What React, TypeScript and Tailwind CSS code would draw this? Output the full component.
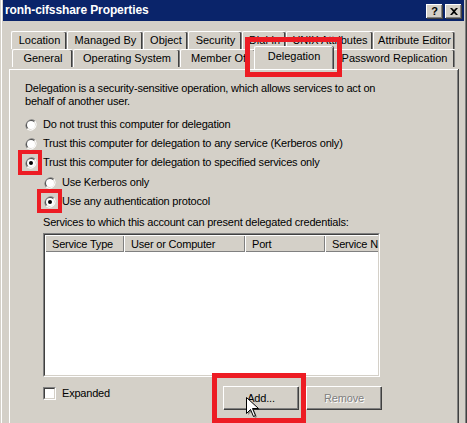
import React from "react";

type TabDef = { label: string; w: string; selected?: boolean };

const rowOne: TabDef[] = [
  { label: "Location", w: "w-[56px]" },
  { label: "Managed By", w: "w-[76px]" },
  { label: "Object", w: "w-[45px]" },
  { label: "Security", w: "w-[54px]" },
  { label: "Dial-in", w: "w-[44px]" },
  { label: "UNIX Attributes", w: "w-[87px]" },
  { label: "Attribute Editor", w: "w-[82px]" },
];

const rowTwo: TabDef[] = [
  { label: "General", w: "w-[61px]" },
  { label: "Operating System", w: "w-[107px]" },
  { label: "Member Of", w: "w-[76px]" },
  { label: "Delegation", w: "w-[79px]", selected: true },
  { label: "Password Replication", w: "w-[122px]" },
];

function Tab({ tab }: { tab: TabDef }) {
  if (tab.selected) {
    return (
      <div
        className={`${tab.w} relative z-10 -ml-[2px] -mt-[3px] h-[23px] bg-[#d4d0c8] border-l border-t border-white rounded-tl-[2px] rounded-tr-[2px] shadow-[inset_-1px_0_0_#808080,1px_0_0_#404040] flex items-start justify-center pt-[3px] whitespace-nowrap`}
      >
        {tab.label}
      </div>
    );
  }
  return (
    <div
      className={`${tab.w} h-[18px] shrink-0 bg-[#d4d0c8] border-l border-t border-white rounded-tl-[2px] rounded-tr-[2px] shadow-[inset_-1px_0_0_#808080,inset_-2px_0_0_#404040] flex items-center justify-center overflow-hidden whitespace-nowrap`}
    >
      {tab.label}
    </div>
  );
}

function Radio({ checked }: { checked?: boolean }) {
  return (
    <svg width="12" height="12" viewBox="0 0 12 12" className="shrink-0">
      <path d="M10.2 1.8 A6 6 0 0 0 1.8 10.2 Z" fill="#808080" />
      <path d="M10.2 1.8 A6 6 0 0 1 1.8 10.2 Z" fill="#ffffff" />
      <path d="M9.5 2.5 A5 5 0 0 0 2.5 9.5 Z" fill="#404040" />
      <path d="M9.5 2.5 A5 5 0 0 1 2.5 9.5 Z" fill="#d4d0c8" />
      <circle cx="6" cy="6" r="4" fill="#ffffff" />
      {checked && <circle cx="6" cy="6" r="2" fill="#000000" />}
    </svg>
  );
}

function RadioRow({ label, checked, className = "" }: { label: string; checked?: boolean; className?: string }) {
  return (
    <div className={`h-[19px] flex items-center gap-[6px] ${className}`}>
      <Radio checked={checked} />
      <span>{label}</span>
    </div>
  );
}

function RedBox({ className }: { className: string }) {
  return <div className={`absolute border-[#ed1c24] pointer-events-none z-20 ${className}`} />;
}

function HeaderCell({ label, w }: { label: string; w: string }) {
  return (
    <div
      className={`${w} h-[17px] shrink-0 bg-[#d4d0c8] border-l border-t border-white shadow-[inset_-1px_-1px_0_#808080] flex items-center pl-[6px] whitespace-nowrap`}
    >
      {label}
    </div>
  );
}

export default function App() {
  return (
    <div className="w-[467px] h-[423px] overflow-hidden relative bg-[#d4d0c8] font-['Liberation_Sans',Arial,sans-serif] text-[11px] text-black leading-[13px] select-none">
      <div className="h-full flex">
        {/* window frame */}
        <div className="w-[3px] h-full border-l border-[#d4d0c8] shadow-[inset_1px_0_0_#ffffff] shrink-0" />
        <div className="flex-1 flex flex-col min-w-0">
          {/* title bar */}
          <div className="h-[21px] bg-[#0a246a] flex items-center pl-[2px] pr-[2px]">
            <span className="text-white font-bold text-[12px] tracking-[-0.1px] flex-1">ronh-cifsshare Properties</span>
            <div className="w-[16px] h-[14px] bg-[#d4d0c8] border-l border-t border-white shadow-[inset_-1px_-1px_0_#808080,1px_1px_0_#404040] flex items-center justify-center font-bold text-[11px] leading-none">
              ?
            </div>
            <div className="w-[16px] h-[14px] ml-[3px] mr-[1px] bg-[#d4d0c8] border-l border-t border-white shadow-[inset_-1px_-1px_0_#808080,1px_1px_0_#404040] flex items-center justify-center">
              <svg width="8" height="7" viewBox="0 0 8 7">
                <path d="M0 0h2l2 2 2-2h2L5 3.5 8 7H6L4 5 2 7H0l3-3.5z" fill="#000" />
              </svg>
            </div>
          </div>

          {/* tab strip */}
          <div className="mt-[10px] flex flex-col">
            <div className="flex pl-[8px]">
              {rowOne.map((t) => (
                <Tab key={t.label} tab={t} />
              ))}
            </div>
            <div className="flex pl-[9px]">
              {rowTwo.map((t) => (
                <Tab key={t.label} tab={t} />
              ))}
            </div>
          </div>

          {/* property page */}
          <div className="ml-[6px] w-[449px] flex-1 border-l border-t border-white shadow-[inset_-1px_0_0_#808080,1px_0_0_#404040] pl-[15px] pt-[12px] tracking-[-0.2px]">
            <p className="w-[380px]">
              Delegation is a security-sensitive operation, which allows services to act on
              <br />
              behalf of another user.
            </p>

            <div className="mt-[7px] flex flex-col">
              <RadioRow label="Do not trust this computer for delegation" />
              <RadioRow label="Trust this computer for delegation to any service (Kerberos only)" />
              <RadioRow label="Trust this computer for delegation to specified services only" checked />
              <div className="pl-[19px] flex flex-col">
                <RadioRow className="mt-[1px]" label="Use Kerberos only" />
                <RadioRow label="Use any authentication protocol" checked />
              </div>
            </div>

            <div className="pl-[18px]">
              <p className="mt-[5px]">Services to which this account can present delegated credentials:</p>

              {/* list view */}
              <div className="mt-[4px] w-[337px] h-[144px] border border-t-[#808080] border-l-[#808080] border-b-white border-r-white">
                <div className="w-full h-full border border-t-[#404040] border-l-[#404040] border-b-[#d4d0c8] border-r-[#d4d0c8] bg-white overflow-hidden">
                  <div className="flex">
                    <HeaderCell label="Service Type" w="w-[79px]" />
                    <HeaderCell label="User or Computer" w="w-[121px]" />
                    <HeaderCell label="Port" w="w-[80px]" />
                    <HeaderCell label="Service Name" w="w-[80px]" />
                  </div>
                </div>
              </div>

              <div className="flex items-start">
                <div className="mt-[10px] w-[180px] flex items-center gap-[6px]">
                  <div className="w-[13px] h-[13px] border border-t-[#808080] border-l-[#808080] border-b-white border-r-white shrink-0">
                    <div className="w-full h-full border border-t-[#404040] border-l-[#404040] border-b-[#d4d0c8] border-r-[#d4d0c8] bg-white" />
                  </div>
                  <span>Expanded</span>
                </div>
                <div className="mt-[9px] flex gap-[8px]">
                  <div className="w-[75px] h-[23px] border-l border-t border-white shadow-[inset_-1px_-1px_0_#808080,1px_1px_0_#404040] flex items-center justify-center">
                    Add...
                  </div>
                  <div className="w-[75px] h-[23px] border-l border-t border-white shadow-[inset_-1px_-1px_0_#808080,1px_1px_0_#404040] flex items-center justify-center text-[#808080] [text-shadow:1px_1px_0_#ffffff]">
                    Remove
                  </div>
                </div>
              </div>
            </div>
          </div>
        </div>
        <div className="w-[3px] h-full shrink-0 shadow-[inset_1px_0_0_#d4d0c8,inset_-1px_0_0_#404040,inset_-2px_0_0_#808080]" />
      </div>

      {/* annotation boxes */}
      <RedBox className="left-[245px] top-[37px] w-[97px] h-[40px] border-[5px]" />
      <RedBox className="left-[18px] top-[150px] w-[24px] h-[25px] border-[4px]" />
      <RedBox className="left-[37px] top-[189px] w-[25px] h-[24px] border-[4px]" />
      <RedBox className="left-[212px] top-[373px] w-[94px] h-[50px] border-[5px]" />

      {/* mouse pointer */}
      <svg className="absolute left-[246px] top-[397px] z-30" width="14" height="22" viewBox="0 0 14 22">
        <path d="M2 2v16l4-4 3 7 2-1-3-7h6z" fill="#000" opacity="0.35" />
        <path d="M0.5 0.5v16l4-4 3 7 2-1-3-7h6z" fill="#fff" stroke="#000" strokeWidth="1" strokeLinejoin="miter" />
      </svg>
    </div>
  );
}
